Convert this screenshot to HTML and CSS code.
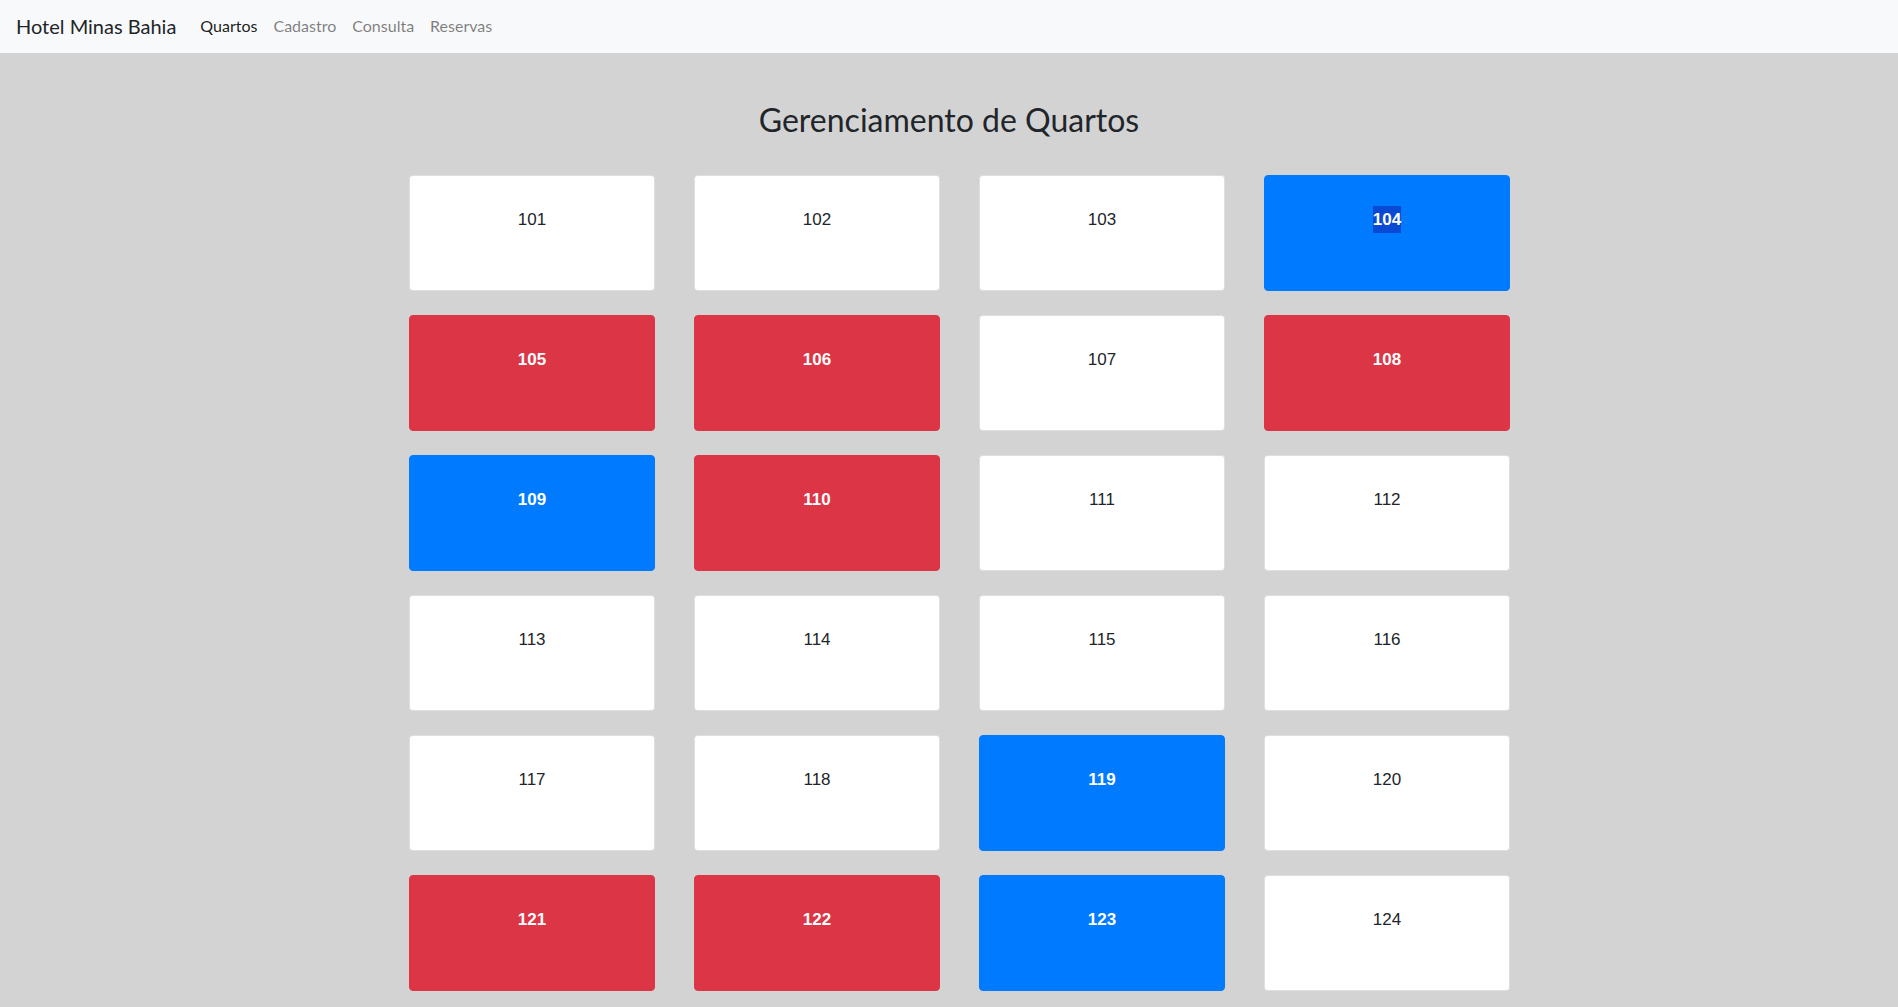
FILE: index.html
```html
<!DOCTYPE html>
<html lang="pt-BR">
<head>
<meta charset="utf-8">
<title>Hotel Minas Bahia</title>
<link rel="stylesheet" href="styles.css">
</head>
<body>
<nav class="navbar">
  <a class="brand" href="#">Hotel Minas Bahia</a>
  <ul class="nav">
    <li><a class="nav-link active" href="#">Quartos</a></li>
    <li><a class="nav-link" href="#">Cadastro</a></li>
    <li><a class="nav-link" href="#">Consulta</a></li>
    <li><a class="nav-link" href="#">Reservas</a></li>
  </ul>
</nav>
<main class="container">
  <h2 class="title">Gerenciamento de Quartos</h2>
  <div class="rooms">
    <div class="room">101</div>
    <div class="room">102</div>
    <div class="room">103</div>
    <div class="room room-blue"><span class="sel">104</span></div>
    <div class="room room-red">105</div>
    <div class="room room-red">106</div>
    <div class="room">107</div>
    <div class="room room-red">108</div>
    <div class="room room-blue">109</div>
    <div class="room room-red">110</div>
    <div class="room">111</div>
    <div class="room">112</div>
    <div class="room">113</div>
    <div class="room">114</div>
    <div class="room">115</div>
    <div class="room">116</div>
    <div class="room">117</div>
    <div class="room">118</div>
    <div class="room room-blue">119</div>
    <div class="room">120</div>
    <div class="room room-red">121</div>
    <div class="room room-red">122</div>
    <div class="room room-blue">123</div>
    <div class="room">124</div>
  </div>
</main>
</body>
</html>
```
FILE: styles.css
```css
* { box-sizing: border-box; }
html, body { margin: 0; padding: 0; }
body {
  background: #d3d3d3;
  color: #212529;
  font-family: "Lato", "Noto Sans", sans-serif;
}
.navbar {
  display: flex;
  align-items: center;
  height: 53px;
  padding: 0 16px 2px;
  background: #f8f9fa;
}
.brand {
  font-size: 20px;
  color: #212529;
  text-decoration: none;
  margin-right: 16px;
}
.nav {
  display: flex;
  list-style: none;
  margin: 0;
  padding: 0;
}
.nav-link {
  display: block;
  padding: 8px;
  font-size: 16px;
  color: rgba(0,0,0,.5);
  text-decoration: none;
}
.nav-link.active { color: rgba(0,0,0,.9); }
.container {
  width: 1140px;
  margin: 0 auto;
  padding: 0 0 30px 30px;
}
.title {
  margin: 48px 0 36px -30px;
  text-align: center;
  font-size: 32px;
  font-weight: 400;
  line-height: 1.2;
}
.rooms {
  display: grid;
  grid-template-columns: repeat(4, 246px);
  column-gap: 39px;
  row-gap: 24px;
}
.room {
  height: 116px;
  padding-top: 30px;
  border: 1px solid rgba(0,0,0,.125);
  border-radius: 4px;
  background: #fff;
  text-align: center;
  font-family: "Liberation Sans", Arial, sans-serif;
  font-size: 17px;
  line-height: 27px;
}
.room-red {
  background: #dc3545;
  border-color: #dc3545;
  color: #fff;
  font-weight: 700;
}
.room-blue {
  background: #007bff;
  border-color: #007bff;
  color: #fff;
  font-weight: 700;
}
.sel {
  display: inline-block;
  background: #0a4ad2;
}
```
